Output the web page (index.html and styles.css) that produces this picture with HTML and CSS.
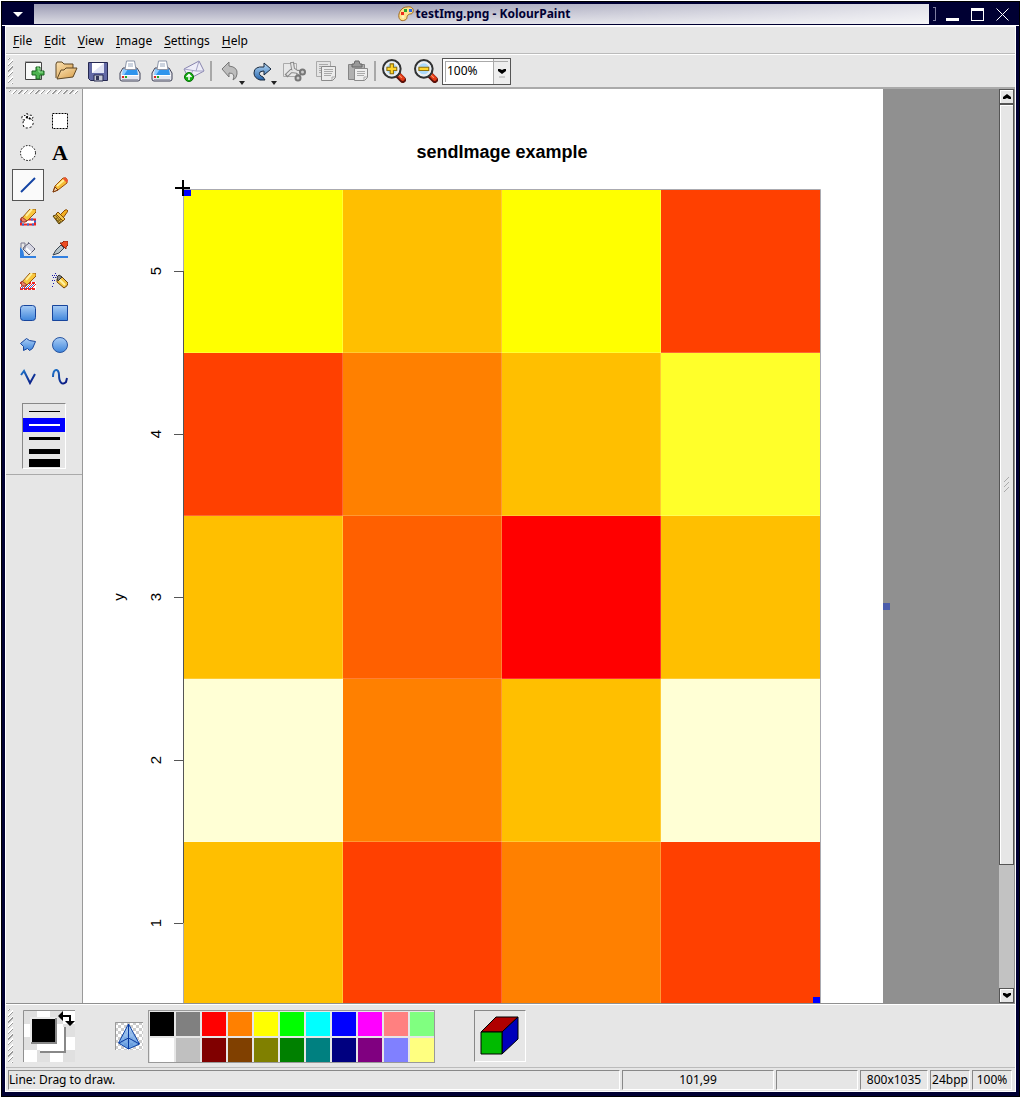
FILE: index.html
```html
<!DOCTYPE html>
<html lang="en">
<head>
<meta charset="utf-8">
<title>testImg.png - KolourPaint</title>
<link rel="stylesheet" href="styles.css">
</head>
<body>
<svg class="defs" width="0" height="0" aria-hidden="true">
  <defs>
    <linearGradient id="blue" x1="0" y1="0" x2="0" y2="1"><stop offset="0" stop-color="#a9cdf5"/><stop offset="1" stop-color="#3f86dc"/></linearGradient>
    <linearGradient id="tan" x1="0" y1="0" x2="1" y2="1"><stop offset="0" stop-color="#fbe3b4"/><stop offset="1" stop-color="#d79b45"/></linearGradient>
    <linearGradient id="ink" x1="0" y1="0" x2="1" y2="1"><stop offset="0" stop-color="#1f75c9"/><stop offset="1" stop-color="#08127e"/></linearGradient>
    <linearGradient id="arrowBlue" x1="0" y1="0" x2="0" y2="1"><stop offset="0" stop-color="#b9dcf8"/><stop offset="1" stop-color="#2665ad"/></linearGradient>
    <pattern id="checks" width="6" height="6" patternUnits="userSpaceOnUse"><rect width="6" height="6" fill="#fff"/><path d="M0 0h3v3h-3zM3 3h3v3h-3z" fill="#ccc"/></pattern>
    <pattern id="tiles" x="1" y="1" width="26" height="26" patternUnits="userSpaceOnUse"><rect width="26" height="26" fill="#fff"/><path d="M0 0h13v13h-13zM13 13h13v13h-13z" fill="#e0e0e0"/></pattern>
    <symbol id="printer" viewBox="0 0 22 22"><path d="M1 13 4 8h14l3 5v6q0 2-2 2H3q-2 0-2-2z" fill="#e4e6ee" stroke="#3f4156"/><path d="M4 9h14l1 6H5z" fill="#2f94ed"/><path d="M4 9h5l-4 6H3z" fill="#8bcaff"/><path d="M6 9.500 7.500 1h8L17 9.500z" fill="#fff" stroke="#8a94a8"/><path d="M9 4h5M9 6h5" stroke="#9aa9c0"/><path d="M2 15.500h18" stroke="#fff"/><path d="M3 16h2v2H3z" fill="#d22"/><path d="M6 16h2v2H6z" fill="#2a2"/><path d="M3 19.500h16" stroke="#a3a5b4"/></symbol>
    <symbol id="lens" viewBox="0 0 22 22"><path d="m14 14 5 5" stroke="#5b1009" stroke-width="6" stroke-linecap="round"/><path d="m15 14 4 4" stroke="#e23b17" stroke-width="4" stroke-linecap="round"/><path d="m15 14 3 3" stroke="#ff9469" stroke-linecap="round"/><circle cx="9" cy="9" r="8" fill="#9bd0f6" stroke="#333" stroke-width="2"/><circle cx="9" cy="9" r="6" fill="#abd9fa" stroke="#eee" stroke-width="2"/></symbol>
    <symbol id="eraser" viewBox="0 0 16 16"><path d="M2 9 10 0h6v3l-8 8q-2 2-4 2-3-1-2-4z" fill="#f8c63d" stroke="#95540c"/><path d="m6 7 6-7" stroke="#fff09b" stroke-width="2"/><path d="m2 8 5 4-2 1H2L1 10z" fill="#ef8168" stroke="#973b28"/></symbol>
  </defs>
</svg>
<div class="window">
  <header class="titlebar">
    <button class="wm wm-menu" aria-label="Window menu"><svg width="10" height="5"><path d="M0 0h10L5 5z" fill="#fff"/></svg></button>
    <h1 class="caption"><svg width="16" height="16" viewBox="0 0 16 16"><path d="M9 1c5-1 7 2 6 5-1 3-3 1-5 3s0 4-3 5c-4 2-7-1-6-6C2 4 5 1 9 1z" fill="#fde28c" stroke="#a1681c"/><path d="M6 3h3v3H6z" fill="#2ba42c"/><path d="M11 3h3v3h-3z" fill="#3267e4"/><path d="M3 6h3v3H3z" fill="#ed2a1d"/><circle cx="5" cy="11" r="1.4" fill="#fff2c0"/></svg><span>testImg.png - KolourPaint</span></h1>
    <div class="wm-group">
      <button class="wm" aria-label="Minimize"><svg width="13" height="13"><path d="M0 10h13v3H0z" fill="#fff"/></svg></button>
      <button class="wm" aria-label="Maximize"><svg width="13" height="13"><path d="M0 0h13v13H0zM1 3v9h11V3z" fill="#fff" fill-rule="evenodd"/></svg></button>
      <button class="wm" aria-label="Close"><svg width="13" height="13"><path d="m.5.5 12 12m0-12-12 12" stroke="#fff"/></svg></button>
    </div>
  </header>
  <div class="frame">
    <nav class="menubar">
      <button><u>F</u>ile</button><button><u>E</u>dit</button><button><u>V</u>iew</button><button><u>I</u>mage</button><button><u>S</u>ettings</button><button><u>H</u>elp</button>
    </nav>
    <div class="toolbar">
      <span class="grip"></span>
      <button aria-label="New"><svg width="22" height="22"><path d="M2.500 2.500h16v17h-16z" fill="#f9faf9" stroke="#444"/><path d="M2 1.500h16" stroke="#aaa"/><path d="M13 7h4v4h4v4h-4v4h-4v-4H9v-4h4z" fill="#4cb350" stroke="#17631c"/><path d="M14 8h2v4h4" stroke="#9be69a" fill="none"/></svg></button>
      <button aria-label="Open"><svg width="24" height="22"><path d="M2 18V4l1-2h5l2 2h9v4" fill="url(#tan)" stroke="#5e4725"/><path d="m3 19 4-9h3l2-2h11l-4 9z" fill="url(#tan)" stroke="#5e4725"/></svg></button>
      <button aria-label="Save"><svg width="22" height="22"><path d="M1.500 2.500h19v18h-17l-2-2z" fill="#6269a5" stroke="#252850"/><path d="M5 3h12v10H5z" fill="#e0e3f4"/><path d="M5 3h12L5 13z" fill="#fff"/><path d="M7 15h9v6H7z" fill="#c7cad6" stroke="#252850"/><path d="M9 16h3v4H9z" fill="#333758"/></svg></button>
      <button aria-label="Print"><svg width="22" height="22"><use href="#printer"/></svg></button>
      <button aria-label="Print preview"><svg width="22" height="22"><use href="#printer"/></svg></button>
      <button aria-label="Mail"><svg width="22" height="22"><path d="m1 9 15-8 5 10L6 19z" fill="#eeedf8" stroke="#8784ad"/><path d="m1 9 12 2 3-10M6 19l4-9m3 1 8 0" fill="none" stroke="#a3a1c5"/><circle cx="6" cy="17" r="4.500" fill="#13ad13" stroke="#087008"/><path d="M6 20v-5M3.500 17 6 14.500 8.500 17" fill="none" stroke="#fff" stroke-width="1.500"/></svg></button>
      <span class="sep"></span>
      <button aria-label="Undo"><svg width="22" height="22"><path d="m3 9 7-7v4q9 1 8 8 0 4-4 6 3-7-4-7v4z" fill="#bdbdbd" stroke="#777"/></svg><svg class="drop" width="6" height="4"><path d="M0 0h6L3 4z" fill="#222"/></svg></button>
      <button aria-label="Redo"><svg width="22" height="22"><path d="m20 9-7-6v4Q3 6 3 13q0 5 6 7h5l-2-3q-5-2-3-5 2-1 4-1v4z" fill="url(#arrowBlue)" stroke="#17283e"/></svg><svg class="drop" width="6" height="4"><path d="M0 0h6L3 4z" fill="#222"/></svg></button>
      <button aria-label="Cut"><svg width="24" height="22"><path d="M1.500 3.500h13v13h-13z" fill="#e8e8e8" stroke="#aaa"/><path d="m10 2 1 7 8 6M4 16l5-5 9 1" fill="none" stroke="#888" stroke-width="4"/><path d="m10 3 1 6 7 5M5 15l4-4 8 1" fill="none" stroke="#e4e4e4" stroke-width="2"/><circle cx="20.500" cy="12" r="2.500" fill="#ccc" stroke="#777" stroke-width="2"/><circle cx="16" cy="18" r="2.500" fill="#ccc" stroke="#777" stroke-width="2"/></svg></button>
      <button aria-label="Copy"><svg width="22" height="22"><path d="M1.500 1.500h14v15h-14z" fill="#e4e4e4" stroke="#aaa"/><path d="M4 4.500h9M4 6.500h2M4 8.500h2M4 10.500h2M4 12.500h2" stroke="#aaa"/><path d="M6.500 6.500h14v11l-3 3h-11z" fill="#ececec" stroke="#8a8a8a"/><path d="M9 9.500h9M9 11.500h9M9 13.500h8M9 15.500h7M17 20v-3h3" fill="none" stroke="#aaa"/></svg></button>
      <button aria-label="Paste"><svg width="22" height="22"><path d="M1.500 4.500h16v15h-16z" fill="#b0b0b0" stroke="#858585"/><path d="M5 7V4h2l1-3h4l1 3h2v3z" fill="#999" stroke="#666"/><path d="M7.500 8.500h13v9l-3 3h-10z" fill="#eee" stroke="#8a8a8a"/><path d="M10 11.500h8M10 13.500h8M10 15.500h7M17 20v-3h3" fill="none" stroke="#aaa"/></svg></button>
      <span class="sep"></span>
      <button aria-label="Zoom in"><svg width="24" height="24" viewBox="0 0 22 22"><use href="#lens"/><path d="M7.500 4.500h3v3h3v3h-3v3h-3v-3h-3v-3h3z" fill="#ffd52c" stroke="#91710a"/></svg></button>
      <button aria-label="Zoom out"><svg width="24" height="24" viewBox="0 0 22 22"><use href="#lens"/><path d="M4.500 7.500h9v3h-9z" fill="#ffd52c" stroke="#91710a"/></svg></button>
      <label class="zoom"><select aria-label="Zoom"><option>100%</option><option>200%</option></select><svg width="8" height="9"><path d="M0 0h2l2 1 2-1h2v2L4 5 0 2z"/><path d="M1 7h6v2H1z" fill="#ccc"/></svg></label>
    </div>
    <main class="workspace">
      <aside class="toolbox">
        <span class="grip grip-wide"></span>
        <div class="tools">
          <button aria-label="Free-form selection"><svg width="16" height="16"><path d="M5 7Q1 7 2 4t3-1q0-3 3-2l-1 3q3-3 6-1 0 3-2 3 3 2 2 5t-2 3q-5 2-7 0-2-4 0-7z" fill="#fff" stroke="#000" stroke-dasharray="2 2"/><path d="m6 4 5 2" stroke="#000" stroke-width="2" stroke-dasharray="2 1"/></svg></button>
          <button aria-label="Rectangular selection"><svg width="16" height="16"><path d="M.5.5h15v15H.5z" fill="#fff" stroke="#000" stroke-dasharray="2 1"/></svg></button>
          <button aria-label="Elliptical selection"><svg width="16" height="16"><circle cx="8" cy="8" r="7.500" fill="#fff" stroke="#000" stroke-dasharray="1.500 1.500"/></svg></button>
          <button class="text-tool" aria-label="Text">A</button>
          <button class="on" aria-label="Line" aria-pressed="true"><svg width="16" height="16"><path d="M1 15 15 1" stroke="url(#ink)" stroke-width="2"/></svg></button>
          <button aria-label="Pen"><svg width="16" height="16"><path d="M1 15 3 9l8-8h3l1 2v3l-9 7z" fill="#f5bd36" stroke="#9b4d0b"/><path d="m5 9 7-6" stroke="#fff09a" stroke-width="2"/><path d="m11 2 4 4 1-3-3-3z" fill="#ed5532"/><path d="m1 15 2-5 3 3z" fill="#f5d6a5" stroke="#7a360b"/></svg></button>
          <button aria-label="Eraser"><svg width="16" height="17" viewBox="0 0 16 17"><path d="M1 10.500h14v5H1z" fill="#fff" stroke="#e22" stroke-width="2"/><path d="M1 10.500h14v5H1z" fill="none" stroke="#2d72dc" stroke-width="2" stroke-dasharray="2 3"/><use href="#eraser" width="16" height="16"/></svg></button>
          <button aria-label="Brush"><svg width="16" height="16"><path d="m8 6 5-5q2-1 3 1l-5 7z" fill="#f2ae20" stroke="#8b4b08"/><path d="m1 7 5-2 6 6-5 4z" fill="#dcae3d" stroke="#4d3a0c"/><path d="m2 8 6 6m-4-7 5 6m-6-2 4-4m-2 6 4-3" stroke="#7d6219"/><path d="m6 3 7 7-2 2-7-7z" fill="#f4c64c" stroke="#7e4b0a"/></svg></button>
          <button aria-label="Flood fill"><svg width="16" height="17" viewBox="0 0 16 17"><path d="M0 6q4 3 4 9h12v2H0z" fill="#3280e0"/><path d="m4 6 5-4 6 6-6 6-6-6z" fill="#d7d7e2" stroke="#555568"/><path d="M1 7V2h4v6m3-7 6 6" fill="none" stroke="#7b7b91"/><path d="m6 7 5 5" stroke="#fff" stroke-width="2"/></svg></button>
          <button aria-label="Color picker"><svg width="16" height="17" viewBox="0 0 16 17"><path d="M0 15h16v2H0z" fill="#3280e0"/><path d="m1 14 3-5 5-5 3 3-5 5z" fill="#b8c4c8" stroke="#3a4450"/><path d="m8 2 2 0 2-2h4v4l-2 2v2z" fill="#ed4e24" stroke="#92240b"/></svg></button>
          <button aria-label="Color eraser"><svg width="16" height="17" viewBox="0 0 16 17"><path d="M0 9h16v8H0z" fill="#fff"/><path d="M0 10h16M0 16h16" stroke="#e22" stroke-width="2" stroke-dasharray="3 1"/><path d="m0 15 4-4m-1 5 5-5m-1 5 5-5m-1 5 5-5" stroke="#e22"/><path d="m1 16 5-5m-1 5 5-5m-1 5 5-5" stroke="#2d72dc"/><use href="#eraser" width="16" height="16"/></svg></button>
          <button aria-label="Spray can"><svg width="16" height="16"><path d="m5 6 4-3 7 7q0 3-4 5L5 9z" fill="#f4c63f" stroke="#714309"/><path d="m7 6 6 6" stroke="#fff2a6" stroke-width="2"/><path d="m5 4 2-2 3 2-4 4z" fill="#888" stroke="#333"/><path d="M0 2.500h5M1 4.500h3M0 7.500h3M1 10.500h2M0 13.500h2M3 .5h2" stroke="#1a1aa8" stroke-dasharray="1 1"/></svg></button>
          <button aria-label="Rounded rectangle"><svg width="16" height="16"><rect x=".5" y=".5" width="15" height="15" rx="3" fill="url(#blue)" stroke="#17459c"/></svg></button>
          <button aria-label="Rectangle"><svg width="16" height="16"><path d="M.5.5h15v15H.5z" fill="url(#blue)" stroke="#17459c"/></svg></button>
          <button aria-label="Polygon"><svg width="16" height="16"><path d="m.5 6.500 6-5 3 2 6 1-3 7-3 2-2-2-4 2v-4z" fill="url(#blue)" stroke="#17459c"/></svg></button>
          <button aria-label="Ellipse"><svg width="16" height="16"><circle cx="8" cy="8" r="7.500" fill="url(#blue)" stroke="#28549f"/></svg></button>
          <button aria-label="Connected lines"><svg width="16" height="16"><path d="m1 6 3-4 6 12 5-9" fill="none" stroke="url(#ink)" stroke-width="2"/></svg></button>
          <button aria-label="Curve"><svg width="16" height="16"><path d="M1 8C1-1 7-1 7 6s3 11 7 7l1-4" fill="none" stroke="url(#ink)" stroke-width="2"/></svg></button>
        </div>
        <div class="widths">
          <button aria-label="1 pixel"><svg width="31" height="1"><path d="M0 0h31v1H0z"/></svg></button>
          <button class="on" aria-label="2 pixels"><svg width="31" height="2"><path d="M0 0h31v2H0z" fill="#fff"/></svg></button>
          <button aria-label="3 pixels"><svg width="31" height="3"><path d="M0 0h31v3H0z"/></svg></button>
          <button aria-label="5 pixels"><svg width="31" height="5"><path d="M0 0h31v5H0z"/></svg></button>
          <button aria-label="8 pixels"><svg width="31" height="8"><path d="M0 0h31v8H0z"/></svg></button>
        </div>
      </aside>
      <section class="viewport" aria-label="Drawing">
        <svg class="drawing" width="808" height="1035" viewBox="0 0 808 1035">
          <path d="M0 0h800v1035H0z" fill="#fff"/>
          <text x="419" y="69" class="plot-title">sendImage example</text>
          <g class="axis-text">
            <text transform="translate(78 182) rotate(-90)">5</text>
            <text transform="translate(78 345) rotate(-90)">4</text>
            <text transform="translate(78 508) rotate(-90)">3</text>
            <text transform="translate(78 671) rotate(-90)">2</text>
            <text transform="translate(78 834) rotate(-90)">1</text>
            <text transform="translate(41 508) rotate(-90)">y</text>
          </g>
          <g>
            <path d="M100 100h160v164H100z" fill="#ff0"/><path d="M260 100h159v164H260z" fill="#ffbf00"/><path d="M419 100h159v164H419z" fill="#ff0"/><path d="M578 100h159v164H578z" fill="#ff4000"/>
            <path d="M100 264h160v163H100z" fill="#ff4000"/><path d="M260 264h159v163H260z" fill="#ff8000"/><path d="M419 264h159v163H419z" fill="#ffbf00"/><path d="M578 264h159v163H578z" fill="#ffff2a"/>
            <path d="M100 427h160v163H100z" fill="#ffbf00"/><path d="M260 427h159v163H260z" fill="#ff6000"/><path d="M419 427h159v163H419z" fill="#f00"/><path d="M578 427h159v163H578z" fill="#ffbf00"/>
            <path d="M100 590h160v163H100z" fill="#ffffd5"/><path d="M260 590h159v163H260z" fill="#ff8000"/><path d="M419 590h159v163H419z" fill="#ffbf00"/><path d="M578 590h159v163H578z" fill="#ffffd5"/>
            <path d="M100 753h160v163H100z" fill="#ffbf00"/><path d="M260 753h159v163H260z" fill="#ff4000"/><path d="M419 753h159v163H419z" fill="#ff8000"/><path d="M578 753h159v163H578z" fill="#ff4000"/>
          </g>
          <path d="M259.500 101v815M418.500 101v815M577.500 101v815M100 263.500h638M100 426.500h638M100 589.500h638M100 752.500h638" stroke="#fff" stroke-opacity=".2"/>
          <path d="M100.500 916V100.500h637V916" fill="none" stroke="#aaaab0"/>
          <path d="M100.500 182v652M91 182.500h9M91 345.500h9M91 508.500h9M91 671.500h9M91 834.500h9" stroke="#555" fill="none"/>
          <path d="M101 101h7v6h-7zM730 908h7v7h-7z" fill="#00f"/>
          <path d="M92 98h15v2H92zM99 91h2v16h-2z"/>
          <path d="M800 514h7v7h-7z" fill="#4a5cab"/>
        </svg>
      </section>
      <div class="scrollbar" aria-hidden="true">
        <span class="scroll-btn"><svg width="8" height="5"><path d="M0 5V3l4-3 4 3v2H6L4 4 2 5z"/></svg></span>
        <span class="thumb"><svg width="6" height="16"><path d="m0 5 5-5M0 10l5-5M0 15l5-5" stroke="#aaa"/></svg></span>
        <span class="track"></span>
        <span class="scroll-btn"><svg width="8" height="5"><path d="M0 0h2l2 1 2-1h2v2L4 5 0 2z"/></svg></span>
      </div>
    </main>
    <div class="colorbar">
      <span class="grip"></span>
      <div class="current"><svg width="52" height="52"><path d="M0 0h52v52H0z" fill="url(#tiles)"/><path d="M.5 52V.5H52" fill="none" stroke="#909090"/><path d="M17 17h25v25H17z" fill="#fff"/><path d="M17 42h25V17" fill="none" stroke="#888" stroke-width="2"/><path d="M7 7h27v27H7z" fill="#e8e8e8"/><path d="M8 33h25V8" fill="none" stroke="#888" stroke-width="2"/><path d="M9 9h23v23H9z"/><path d="m35 6 5-5v4h8v6h4l-5 5-5-5h4V7h-6v4z"/></svg></div>
      <button class="similarity" aria-label="Color similarity"><svg width="28" height="28"><path d="M0 0h28v28H0z" fill="url(#checks)"/><path d="M.5 28V.500H28" fill="none" stroke="#999"/><path d="m13.500 2 11 20-11 5-10-6z" fill="url(#blue)" fill-opacity=".8" stroke="#0b41a5"/><path d="M13.500 2v25M4 21l9.500-5 11 6" fill="none" stroke="#0838a0"/></svg></button>
      <div class="palette">
        <button class="c1" aria-label="Black"></button><button class="c2" aria-label="Gray"></button><button class="c3" aria-label="Red"></button><button class="c4" aria-label="Orange"></button><button class="c5" aria-label="Yellow"></button><button class="c6" aria-label="Green"></button><button class="c7" aria-label="Cyan"></button><button class="c8" aria-label="Blue"></button><button class="c9" aria-label="Magenta"></button><button class="c10" aria-label="Light red"></button><button class="c11" aria-label="Light green"></button>
        <button class="c12" aria-label="White"></button><button class="c13" aria-label="Silver"></button><button class="c14" aria-label="Dark red"></button><button class="c15" aria-label="Brown"></button><button class="c16" aria-label="Olive"></button><button class="c17" aria-label="Dark green"></button><button class="c18" aria-label="Teal"></button><button class="c19" aria-label="Navy"></button><button class="c20" aria-label="Purple"></button><button class="c21" aria-label="Light blue"></button><button class="c22" aria-label="Light yellow"></button>
      </div>
      <button class="cube" aria-label="More colors"><svg width="40" height="40"><path d="M1 16 16 1h22L22 16z" fill="#b00000" stroke="#000"/><path d="m22 16 16-15v22L22 38z" fill="#00b" stroke="#000"/><path d="M1 16h21v22H1z" fill="#00ba00" stroke="#000"/></svg></button>
    </div>
    <footer class="statusbar">
      <span class="message">Line: Drag to draw.</span><span class="point">101,99</span><span class="extent"></span><span class="size">800x1035</span><span class="depth">24bpp</span><span class="depth">100%</span>
    </footer>
  </div>
</div>
</body>
</html>
```
FILE: styles.css
```css
* { box-sizing: border-box; }
body { margin: 0; background: #fff; color: #000; font: 12px/16px "Noto Sans", "Open Sans", sans-serif; }
button { margin: 0; padding: 0; border: 0; background: none; color: inherit; font: inherit; }
svg { display: block; flex: none; }
.defs { position: absolute; }

.window { display: flex; flex-direction: column; height: 100vh; border: solid #fff; border-width: 1px; outline: 1px solid #000; outline-offset: -2px; }
.titlebar { display: flex; height: 25px; padding: 2px 5px 2px 0; background: #000033; border-top: 1px solid #7d7da0; border-left: 1px solid #7d7da0; flex: none; }
.wm { display: grid; place-items: center; width: 25px; }
.wm-menu { width: 32px; }
.caption { flex: 1; display: flex; align-items: center; justify-content: center; gap: 2px; margin: 0; padding-left: 5px; color: #000033; font-size: 12px; font-weight: bold; background: linear-gradient(to right, rgba(255,255,255,0) 40%, rgba(255,255,255,.7)), linear-gradient(#9c9cb4, #dcdce4); }
.wm-group { display: flex; align-items: center; margin-left: 4px; padding-left: 4px; }
.wm-group::before { content: ""; width: 2px; height: 12px; border: 1px solid #7d7da0; border-left: 0; margin-left: -4px; margin-right: 4px; }

.frame { flex: 1; min-height: 0; display: flex; flex-direction: column; background: #e6e6e6; border: solid #000033; border-width: 0 4px 5px 4px; box-shadow: inset 0 0 0 1px #fff, 0 -1px 0 #fff; padding: 1px; }
.menubar { display: flex; align-items: center; height: 27px; padding: 1px 0 0 1px; border-bottom: 1px solid #bbb; flex: none; }
.menubar button { padding: 0 6px; }
.menubar u { text-underline-offset: 2px; }
.toolbar { display: flex; align-items: center; height: 35px; padding-left: 2px; border-top: 1px solid #fff; border-bottom: 2px solid #aaa; flex: none; }
.toolbar button { display: grid; place-items: center; position: relative; width: 32px; height: 32px; }
.drop { position: absolute; right: 1px; bottom: 2px; }
.sep { width: 4px; height: 20px; border-left: 2px solid #a8a8a8; }
.grip { width: 5px; height: 26px; margin-right: 5px; background: repeating-linear-gradient(135deg, #fff 0 1px, #999 1px 2px, transparent 2px 4px); flex: none; }
.grip-wide { width: auto; height: 4px; margin: 0 4px 11px 3px; }
.zoom { position: relative; display: flex; width: 69px; height: 27px; padding: 2px; border: 1px solid #555; background: linear-gradient(to right, #fff 50px, #aaa 50px 51px, #eee 51px); }
.zoom select { flex: 1; appearance: none; padding: 0 0 0 2px; border: 0; background: none; font: inherit; outline: 0; box-shadow: inset 1px 1px #aaa; }
.zoom svg { position: absolute; right: 4px; top: 10px; }

.workspace { flex: 1; min-height: 0; display: flex; border-bottom: 1px solid #909090; }
.toolbox { width: 77px; display: flex; flex-direction: column; border-right: 1px solid #999; padding-top: 1px; flex: none; }
.tools { display: grid; grid-template-columns: 32px 32px; grid-auto-rows: 32px; padding-left: 6px; }
.tools button { display: grid; place-items: center; border: 1px solid transparent; }
.tools .on { border-color: #555; background: #fafafa; }
.tools .text-tool { font: bold 22px/26px "Liberation Serif", serif; }
.toolbox::after { content: ""; border-top: 1px solid #aaa; margin-top: 5px; }
.widths { display: grid; grid-template-rows: 14px 14px 13px 12px 11px; align-self: start; width: 44px; margin: 10px 0 0 16px; border: 1px solid; border-color: #888 #fff #fff #888; }
.widths button { display: grid; place-items: center; }
.widths .on { background: #00f; }
.viewport { flex: 1; min-width: 0; overflow: hidden; background: #909090; }
.plot-title { font: bold 18px "Liberation Sans", sans-serif; text-anchor: middle; }
.axis-text { font: 15px "Liberation Sans", sans-serif; text-anchor: middle; }
.scrollbar { width: 16px; display: flex; flex-direction: column; border-right: 1px solid #909090; flex: none; }
.scroll-btn, .thumb { display: grid; place-items: center; border: 1px solid #555; background: #e6e6e6; box-shadow: inset 1px 1px #fff; }
.scroll-btn { height: 15px; flex: none; }
.thumb { flex: 762; }
.track { flex: 123; background: #c2c2c2; }

.colorbar { display: flex; align-items: center; height: 64px; padding-left: 2px; border-top: 1px solid #fff; border-bottom: 1px solid #bbb; flex: none; }
.colorbar .grip { height: 54px; margin-right: 10px; }
.similarity { margin: 0 5px 0 40px; }
.palette { display: grid; grid-template-columns: repeat(11, 24px); grid-auto-rows: 24px; gap: 2px; padding: 1px 0 0 1px; border: 1px solid #999; }
.cube { display: grid; place-items: center; width: 52px; height: 52px; margin-left: 39px; border: 1px solid; border-color: #888 #fff #fff #888; }
.c1 { background: #000; } .c2 { background: #808080; } .c3 { background: #f00; } .c4 { background: #ff8000; } .c5 { background: #ff0; } .c6 { background: #0f0; } .c7 { background: #0ff; } .c8 { background: #00f; } .c9 { background: #f0f; } .c10 { background: #ff8080; } .c11 { background: #80ff80; }
.c12 { background: #fff; } .c13 { background: #c0c0c0; } .c14 { background: #800000; } .c15 { background: #804000; } .c16 { background: #808000; } .c17 { background: #008000; } .c18 { background: #008080; } .c19 { background: #000080; } .c20 { background: #800080; } .c21 { background: #8080ff; } .c22 { background: #ffff80; }

.statusbar { display: flex; gap: 2px; height: 23px; padding: 2px 3px 1px 2px; flex: none; }
.statusbar span { border: 1px solid; border-color: #888 #fff #fff #888; line-height: 18px; text-align: center; white-space: nowrap; }
.statusbar .message { flex: 1; text-align: left; }
.point { width: 152px; }
.extent { width: 82px; }
.size { width: 68px; }
.depth { width: 40px; }
```
